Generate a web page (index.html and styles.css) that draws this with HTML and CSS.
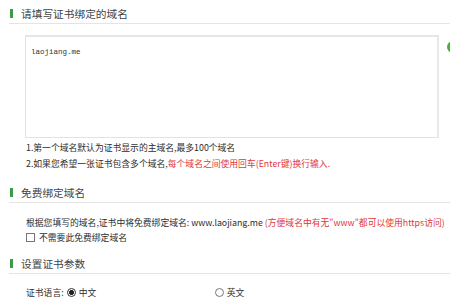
FILE: index.html
```html
<!DOCTYPE html>
<html lang="zh-CN">
<head>
    <meta charset="UTF-8">
    <title>证书域名</title>
    <link rel="stylesheet" href="styles.css">
</head>
<body>
    <div class="section-title"><span class="bar"></span>请填写证书绑定的域名</div>
    <div class="domain-box">
        <div class="textarea">laojiang.me</div>
        <span class="ok-icon"></span>
    </div>
    <div class="tips">
        <p>1.第一个域名默认为证书显示的主域名,最多100个域名</p>
        <p>2.如果您希望一张证书包含多个域名,<span class="red">每个域名之间使用回车(Enter键)换行输入.</span></p>
    </div>

    <div class="section-title"><span class="bar"></span>免费绑定域名</div>
    <div class="free">
        <p>根据您填写的域名,证书中将免费绑定域名: www.laojiang.me <span class="red">(方便域名中有无"www"都可以使用https访问)</span></p>
        <p class="check"><span class="checkbox"></span>不需要此免费绑定域名</p>
    </div>

    <div class="section-title"><span class="bar"></span>设置证书参数</div>
    <div class="params">
        <span class="label">证书语言:</span>
        <span class="option first"><span class="radio checked"></span>中文</span>
        <span class="option"><span class="radio"></span>英文</span>
    </div>
</body>
</html>
```

FILE: styles.css
```css
body {
    margin: 0;
    font-family: "Noto Sans CJK SC", "Noto Sans", sans-serif;
    color: #2e2e2e;
    background: #fff;
    overflow: hidden;
}
p {
    margin: 0;
}
.section-title {
    display: flex;
    align-items: center;
    margin-left: 9px;
    padding-top: 4px;
    height: 19px;
    line-height: 19px;
    font-size: 10.7px;
    color: #444;
    border-bottom: 1px solid #e4e4e4;
}
.bar {
    width: 3px;
    height: 9px;
    margin-left: 1px;
    margin-right: 8px;
    background: #3b9b48;
}
.domain-box {
    display: flex;
    align-items: flex-start;
    margin-top: 11px;
    margin-left: 25px;
}
.textarea {
    box-sizing: border-box;
    flex-shrink: 0;
    width: 414px;
    height: 103px;
    padding: 11px 5px;
    border: 1px solid #e2e2e2;
    border-top: 2px solid #e6e6e6;
    border-right: 2px solid #e8e8e8;
    font-family: "Liberation Mono", monospace;
    font-size: 7.5px;
    color: #333;
}
.ok-icon {
    flex-shrink: 0;
    width: 12px;
    height: 12px;
    margin-top: 6px;
    margin-left: 8px;
    border-radius: 50%;
    background: #4ab03a;
}
.tips {
    margin-top: 2px;
    margin-bottom: 7px;
    margin-left: 26px;
    font-size: 8.8px;
    line-height: 16px;
}
.red {
    color: #e0383a;
}
.free {
    margin-top: 12px;
    margin-bottom: 5px;
    margin-left: 26px;
    font-size: 8.8px;
    line-height: 15px;
    white-space: nowrap;
}
.check {
    display: flex;
    align-items: center;
}
.checkbox {
    box-sizing: border-box;
    width: 9px;
    height: 9px;
    margin-right: 4px;
    border: 1px solid #777;
    background: #fff;
}
.params {
    display: flex;
    align-items: center;
    margin-top: 11px;
    margin-left: 26px;
    font-size: 8.8px;
    line-height: 15px;
}
.option {
    display: flex;
    align-items: center;
}
.option.first {
    width: 148px;
}
.label {
    margin-right: 3px;
}
.radio {
    box-sizing: border-box;
    width: 9px;
    height: 9px;
    margin-right: 3px;
    border: 1px solid #777;
    border-radius: 50%;
    background: #fff;
}
.radio.checked {
    border-color: #333;
    background: radial-gradient(circle, #222 0 2.2px, #fff 2.6px);
}
```
